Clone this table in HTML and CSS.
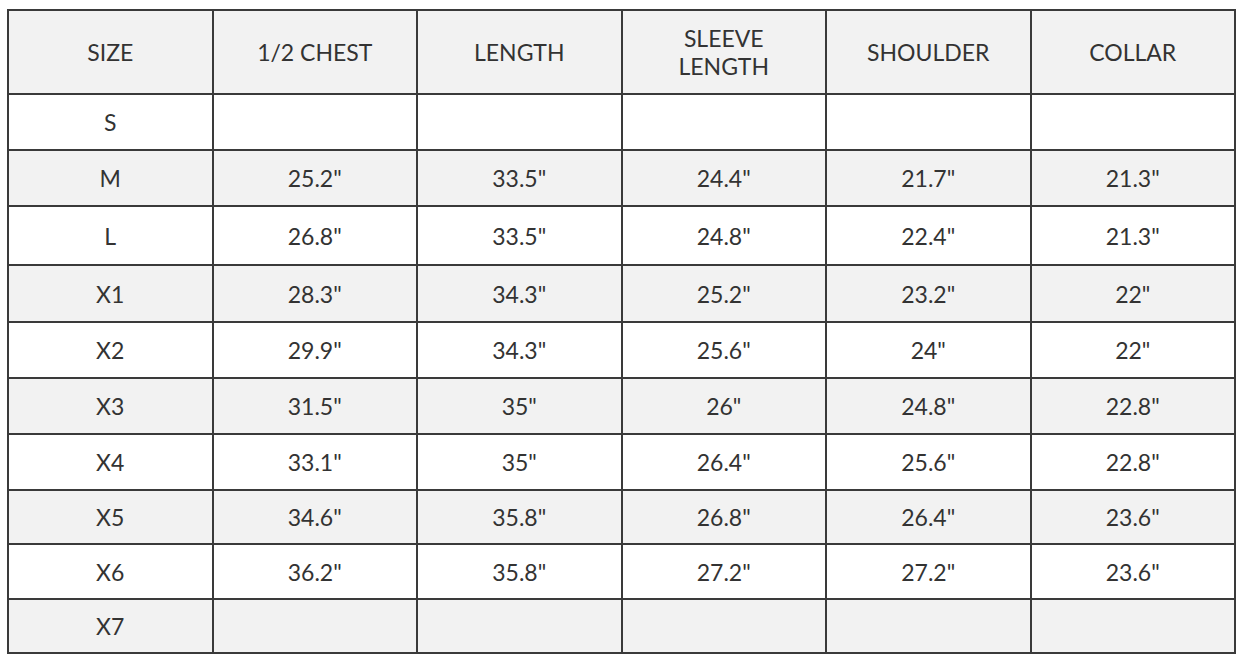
FILE: index.html
```html
<!DOCTYPE html>
<html>
<head>
<meta charset="utf-8">
<link rel="stylesheet" href="styles.css">
</head>
<body>
<table class="size-table">
  <colgroup>
    <col class="c"><col class="c"><col class="c"><col class="c"><col class="c"><col class="c">
  </colgroup>
  <thead>
    <tr class="head">
      <th>SIZE</th><th>1/2 CHEST</th><th>LENGTH</th><th>SLEEVE<br>LENGTH</th><th>SHOULDER</th><th>COLLAR</th>
    </tr>
  </thead>
  <tbody>
    <tr class="r56 w"><td>S</td><td></td><td></td><td></td><td></td><td></td></tr>
    <tr class="r56 g"><td>M</td><td>25.2"</td><td>33.5"</td><td>24.4"</td><td>21.7"</td><td>21.3"</td></tr>
    <tr class="r59 w"><td>L</td><td>26.8"</td><td>33.5"</td><td>24.8"</td><td>22.4"</td><td>21.3"</td></tr>
    <tr class="r57 g"><td>X1</td><td>28.3"</td><td>34.3"</td><td>25.2"</td><td>23.2"</td><td>22"</td></tr>
    <tr class="r56 w"><td>X2</td><td>29.9"</td><td>34.3"</td><td>25.6"</td><td>24"</td><td>22"</td></tr>
    <tr class="r56 g"><td>X3</td><td>31.5"</td><td>35"</td><td>26"</td><td>24.8"</td><td>22.8"</td></tr>
    <tr class="r56 w"><td>X4</td><td>33.1"</td><td>35"</td><td>26.4"</td><td>25.6"</td><td>22.8"</td></tr>
    <tr class="r54 g"><td>X5</td><td>34.6"</td><td>35.8"</td><td>26.8"</td><td>26.4"</td><td>23.6"</td></tr>
    <tr class="r55 w"><td>X6</td><td>36.2"</td><td>35.8"</td><td>27.2"</td><td>27.2"</td><td>23.6"</td></tr>
    <tr class="r54 g"><td>X7</td><td></td><td></td><td></td><td></td><td></td></tr>
  </tbody>
</table>
</body>
</html>
```
FILE: styles.css
```css
html, body {
  margin: 0;
  padding: 0;
  background: #ffffff;
}
body {
  padding: 9px 6px 0 7px;
  font-family: "Lato", "Open Sans", sans-serif;
  color: #333333;
}
.size-table {
  width: 1227px;
  border-collapse: collapse;
  table-layout: fixed;
  border: 2px solid #3a3a3a;
}
.size-table .c {
  width: 204.5px;
}
.size-table th,
.size-table td {
  border: 2px solid #3a3a3a;
  text-align: center;
  vertical-align: middle;
  padding: 0;
  font-size: 23px;
  font-weight: 400;
  line-height: 28px;
}
.head {
  height: 84px;
  background: #f2f2f2;
}
.g { background: #f2f2f2; }
.w { background: #ffffff; }
.r54 { height: 54px; }
.r55 { height: 55px; }
.r56 { height: 56px; }
.r57 { height: 57px; }
.r59 { height: 59px; }
```
